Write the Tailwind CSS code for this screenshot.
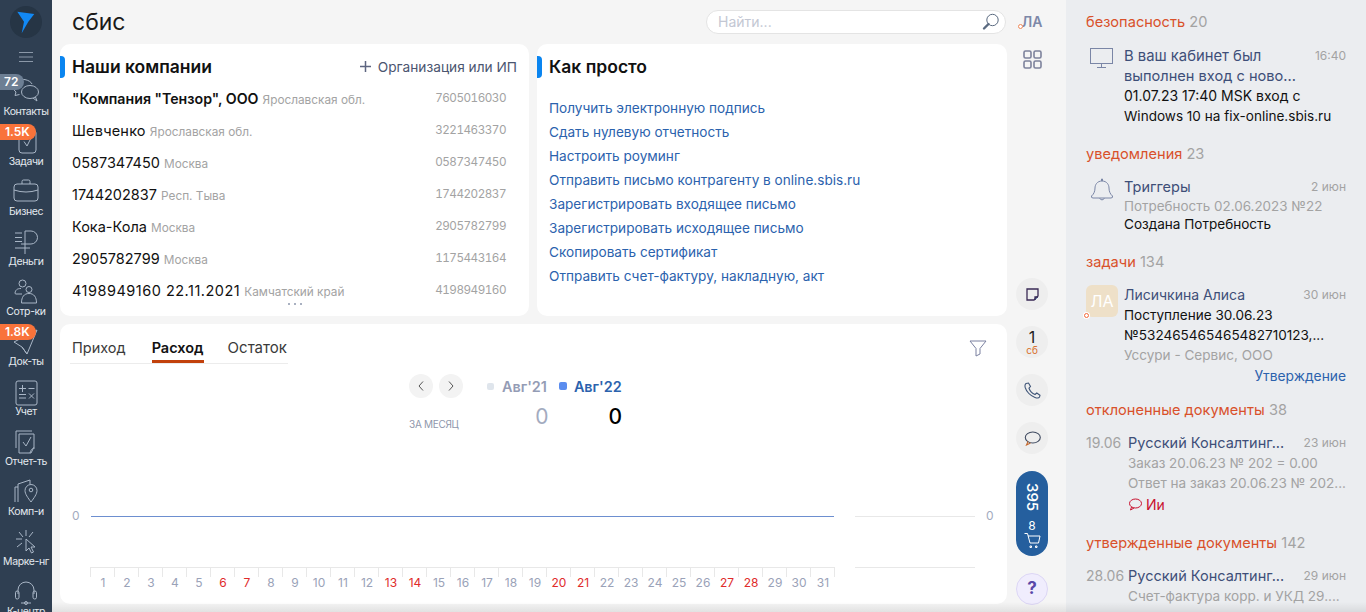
<!DOCTYPE html>
<html lang="ru">
<head>
<meta charset="utf-8">
<script src="https://cdn.jsdelivr.net/npm/@tailwindcss/browser@4"></script>
</head>
<body class="[font-family:Inter,sans-serif] overflow-hidden">
<div class="relative flex h-[612px] w-[1366px] overflow-hidden bg-[#f5f5f5]">

  <!-- NAV -->
  <nav class="relative flex h-[612px] w-[52px] shrink-0 flex-col items-center overflow-hidden bg-[#2f3f52] text-[#e4e9ef]">
    <div class="flex h-[44px] w-full shrink-0 items-start justify-center pt-[6px]">
      <svg width="32" height="32" viewBox="0 0 32 32"><circle cx="16" cy="16" r="16" fill="#263545"/><path d="M7.300 5.700 24.300 8 18.300 15.700 11.700 27.300 14 15.700Z" fill="#1289f5"/></svg>
    </div>
    <div class="flex h-[25px] w-full shrink-0 items-start justify-center">
      <svg width="16" height="12" viewBox="0 0 16 12" class="mt-[7px]" stroke="#8b98a8" fill="none"><path d="M1 1.500h14M1 6h14M1 10.500h14"/></svg>
    </div>

    <a class="flex h-[50px] w-full shrink-0 flex-col items-center justify-end pb-[1px]">
      <svg width="28" height="26" viewBox="0 0 28 26" fill="none" stroke="#a9b6c6" stroke-width="1"><path d="M3 1.500C9-1 18 .5 20 5"/><path d="M3 3C.5 6 1 11 4 13L3 16.500 7.500 15.500"/><ellipse cx="18" cy="13" rx="8.500" ry="6.500"/><path d="M21 19 25 22 23.500 18"/></svg>
      <span class="text-[10.5px] leading-[13px] tracking-[-0.4px]">Контакты</span>
    </a>
    <a class="flex h-[50px] w-full shrink-0 flex-col items-center justify-end pb-[1px]">
      <svg width="22" height="26" viewBox="0 0 22 26" fill="none" stroke="#a9b6c6"><rect x="4" y="1" width="17" height="23" rx="3"/><path d="M9 12.500 12 17 17 7"/></svg>
      <span class="text-[10.5px] leading-[13px] tracking-[-0.4px]">Задачи</span>
    </a>
    <a class="flex h-[50px] w-full shrink-0 flex-col items-center justify-end pb-[1px]">
      <svg width="26" height="24" viewBox="0 0 26 24" fill="none" stroke="#a9b6c6" class="mb-[2px]"><path d="M9 5V2.500Q9 1 10.500 1h5Q17 1 17 2.500V5"/><rect x="1" y="5" width="24" height="17" rx="3"/><path d="M1 11Q13 15 25 11"/></svg>
      <span class="text-[10.5px] leading-[13px] tracking-[-0.4px]">Бизнес</span>
    </a>
    <a class="flex h-[50px] w-full shrink-0 flex-col items-center justify-end pb-[1px]">
      <svg width="24" height="26" viewBox="0 0 24 26" fill="none" stroke="#a9b6c6"><path d="M11 25V2h6a6 6 0 0 1 0 13H7M1 4h7M1 8.500h7M1 12.500h7M1 19h15"/></svg>
      <span class="text-[10.5px] leading-[13px] tracking-[-0.4px]">Деньги</span>
    </a>
    <a class="flex h-[50px] w-full shrink-0 flex-col items-center justify-end pb-[1px]">
      <svg width="24" height="26" viewBox="0 0 24 26" fill="none" stroke="#a9b6c6"><circle cx="8.500" cy="4.500" r="3.500"/><circle cx="15" cy="10.500" r="3"/><path d="M8 15H2Q1 15 1 14C1.500 11 3 9.500 7 9.500M7.500 24c0-6 2.500-9.500 7.500-9.500S22.500 18 22.500 24Z"/></svg>
      <span class="text-[10.5px] leading-[13px] tracking-[-0.4px]">Сотр-ки</span>
    </a>
    <a class="flex h-[50px] w-full shrink-0 flex-col items-center justify-end pb-[1px]">
      <svg width="26" height="26" viewBox="0 0 26 26" fill="none" stroke="#a9b6c6"><path d="M24 1 1 13 9 18 14 25 24 1ZM9 18 14 25"/></svg>
      <span class="text-[10.5px] leading-[13px] tracking-[-0.4px]">Док-ты</span>
    </a>
    <a class="flex h-[50px] w-full shrink-0 flex-col items-center justify-end pb-[1px]">
      <svg width="24" height="26" viewBox="0 0 24 26" fill="none" stroke="#a9b6c6" class="mb-[-1px]"><rect x="2" y="1" width="21" height="24" rx="2"/><path d="M5 8.500h7M8.500 5v7M14.500 8.500h6M5 14.500h7M5 18h7M15 13.500l5 5M20 13.500l-5 5"/></svg>
      <span class="text-[10.5px] leading-[13px] tracking-[-0.4px]">Учет</span>
    </a>
    <a class="flex h-[50px] w-full shrink-0 flex-col items-center justify-end pb-[1px]">
      <svg width="22" height="26" viewBox="0 0 22 26" fill="none" stroke="#a9b6c6"><path d="M1 19V2h16"/><path d="M4 24V5h15v13l-3 6Z"/><path d="M8 13l3 4 5-9M15 24c1-4 3-5 5-5"/></svg>
      <span class="text-[10.5px] leading-[13px] tracking-[-0.4px]">Отчет-ть</span>
    </a>
    <a class="flex h-[50px] w-full shrink-0 flex-col items-center justify-end pb-[1px]">
      <svg width="24" height="27" viewBox="0 0 24 27" fill="none" stroke="#a9b6c6"><path d="M1 24V9h3M4 24V6l12-4v4"/><path d="M17 24c-3-4-6-8-6-11.500a6 6 0 0 1 12 0C23 16 20 20 17 24Z"/><circle cx="17" cy="12" r="1.800"/></svg>
      <span class="text-[10.5px] leading-[13px] tracking-[-0.4px]">Комп-и</span>
    </a>
    <a class="flex h-[50px] w-full shrink-0 flex-col items-center justify-end pb-[1px]">
      <svg width="24" height="26" viewBox="0 0 24 26" fill="none" stroke="#a9b6c6"><path d="M12 1v6M2 10h6M5 3l4 5M19 3l-4 5M3 18l5-4"/><path d="M12 10 21 18 17 18 19.500 23 17.500 24 15 19 12 22Z"/></svg>
      <span class="text-[10.5px] leading-[13px] tracking-[-0.4px]">Марке-нг</span>
    </a>
    <a class="flex h-[50px] w-full shrink-0 flex-col items-center justify-end pb-[1px]">
      <svg width="24" height="26" viewBox="0 0 24 26" fill="none" stroke="#a9b6c6"><path d="M4 15V11a8 8 0 0 1 16 0v4"/><rect x="1.500" y="12" width="3.500" height="8" rx="1.700"/><rect x="19" y="12" width="3.500" height="8" rx="1.700"/><path d="M7 24h10"/><circle cx="12" cy="24" r="1.500"/></svg>
      <span class="whitespace-nowrap text-[10.5px] leading-[13px] tracking-[-0.4px]">К-центр</span>
    </a>

    <span class="absolute left-0 top-[74px] flex h-[16px] w-[24px] items-center rounded-r-full bg-[#6d7f94] pl-[4px] text-[12px] font-semibold text-white">72</span>
    <span class="absolute left-0 top-[124px] flex h-[16px] w-[36px] items-center rounded-r-full bg-[#f9733a] pl-[5px] text-[12px] font-semibold text-white">1.5K</span>
    <span class="absolute left-0 top-[324px] flex h-[16px] w-[36px] items-center rounded-r-full bg-[#f9733a] pl-[5px] text-[12px] font-semibold text-white">1.8K</span>
  </nav>

  <!-- MAIN -->
  <main class="flex w-[955px] shrink-0 flex-col pl-[8px]">
    <header class="flex h-[44px] items-center justify-between pl-[12px] pr-[1px]">
      <span class="text-[23px] leading-none text-[#1a1a1a]">сбис</span>
      <div class="mb-[1px] flex h-[24px] w-[300px] items-center justify-between rounded-full border border-[#e4e4e4] bg-white pl-[11px] pr-[5px]">
        <span class="text-[14px] text-[#c3c7d3]">Найти...</span>
        <svg width="18" height="18" viewBox="0 0 18 18" fill="none"><circle cx="10.500" cy="7" r="5.700" stroke="#5a6a80" stroke-width="1"/><path d="M6.500 11 2 15.500" stroke="#5a6a80" stroke-width="2.400" stroke-linecap="round"/></svg>
      </div>
    </header>

    <div class="flex h-[272px] gap-[8px]">
      <section class="flex w-[469px] flex-col rounded-[10px] bg-white">
        <div class="flex h-[46px] shrink-0 items-center justify-between pr-[12px]">
          <div class="flex items-center gap-[7px]">
            <span class="h-[22px] w-[5px] rounded-r-[4px] bg-[#0a85f0]"></span>
            <h2 class="text-[17.5px] font-semibold leading-none text-[#111]">Наши компании</h2>
          </div>
          <div class="flex items-center gap-[7px] text-[13.7px] text-[#4b5570]">
            <svg width="11" height="11" viewBox="0 0 11 11" stroke="#5d6580" stroke-width="1.500"><path d="M5.500 0v11M0 5.500h11"/></svg>
            <span>Организация или ИП</span>
          </div>
        </div>
        <ul class="relative mt-[-7px] flex flex-col pl-[12px] pr-[23px]">
          <li class="flex h-[32px] items-center justify-between"><span class="text-[14.5px] text-[#111]"><b class="text-[14.2px] font-semibold">"Компания "Тензор", ООО</b> <span class="text-[11.8px] text-[#a3a3a3]">Ярославская обл.</span></span><span class="text-[11.7px] tabular-nums tracking-[-0.5px] text-[#a3a3a3]">7605016030</span></li>
          <li class="flex h-[32px] items-center justify-between"><span class="text-[14.5px] text-[#111]"><span class="tracking-[0.2px]">Шевченко</span> <span class="text-[11.8px] text-[#a3a3a3]">Ярославская обл.</span></span><span class="text-[11.7px] tabular-nums tracking-[-0.5px] text-[#a3a3a3]">3221463370</span></li>
          <li class="flex h-[32px] items-center justify-between"><span class="text-[14.5px] text-[#111]">0587347450 <span class="text-[11.8px] text-[#a3a3a3]">Москва</span></span><span class="text-[11.7px] tabular-nums tracking-[-0.5px] text-[#a3a3a3]">0587347450</span></li>
          <li class="flex h-[32px] items-center justify-between"><span class="text-[14.5px] text-[#111]">1744202837 <span class="text-[11.8px] text-[#a3a3a3]">Респ. Тыва</span></span><span class="text-[11.7px] tabular-nums tracking-[-0.5px] text-[#a3a3a3]">1744202837</span></li>
          <li class="flex h-[32px] items-center justify-between"><span class="text-[14.5px] text-[#111]">Кока-Кола <span class="text-[11.8px] text-[#a3a3a3]">Москва</span></span><span class="text-[11.7px] tabular-nums tracking-[-0.5px] text-[#a3a3a3]">2905782799</span></li>
          <li class="flex h-[32px] items-center justify-between"><span class="text-[14.5px] text-[#111]">2905782799 <span class="text-[11.8px] text-[#a3a3a3]">Москва</span></span><span class="text-[11.7px] tabular-nums tracking-[-0.5px] text-[#a3a3a3]">1175443164</span></li>
          <li class="flex h-[32px] items-center justify-between"><span class="text-[14.5px] text-[#111]"><span class="tracking-[0.5px]">4198949160 22.11.2021</span> <span class="text-[11.8px] text-[#a3a3a3]">Камчатский край</span></span><span class="text-[11.7px] tabular-nums tracking-[-0.5px] text-[#a3a3a3]">4198949160</span></li>
          <li class="absolute left-[228px] top-[220px] flex gap-[4px]"><i class="h-[2px] w-[2px] rounded-full bg-[#8d97ad]"></i><i class="h-[2px] w-[2px] rounded-full bg-[#8d97ad]"></i><i class="h-[2px] w-[2px] rounded-full bg-[#8d97ad]"></i></li>
        </ul>
      </section>
      <section class="flex w-[470px] flex-col rounded-[10px] bg-white">
        <div class="flex h-[46px] items-center gap-[7px]">
          <span class="h-[22px] w-[5px] rounded-r-[4px] bg-[#0a85f0]"></span>
          <h2 class="text-[17.5px] font-semibold leading-none text-[#111]">Как просто</h2>
        </div>
        <ul class="mt-[6px] flex flex-col pl-[12px] text-[13.6px] leading-[24px] text-[#2b62ad]">
          <li>Получить электронную подпись</li>
          <li>Сдать нулевую отчетность</li>
          <li>Настроить роуминг</li>
          <li>Отправить письмо контрагенту в online.sbis.ru</li>
          <li>Зарегистрировать входящее письмо</li>
          <li>Зарегистрировать исходящее письмо</li>
          <li>Скопировать сертификат</li>
          <li>Отправить счет-фактуру, накладную, акт</li>
        </ul>
      </section>
    </div>

    <section class="mt-[8px] flex h-[280px] w-[947px] flex-col rounded-[10px] bg-white">
      <div class="flex h-[40px] items-start justify-between pl-[10px] pr-[20px]">
        <div class="flex h-[40px] w-[218px] gap-[25px] border-b border-[#ececec] pl-[2px] pt-[15px] text-[14.5px] leading-[18px] text-[#3a3a3a]">
          <span class="mr-[1px]">Приход</span>
          <span class="h-[24px] border-b-[3px] border-[#c2410c] font-semibold text-[#111]">Расход</span>
          <span class="ml-[-1px] text-[15px]">Остаток</span>
        </div>
        <svg width="18" height="17" viewBox="0 0 18 17" fill="none" stroke="#7a80a0" class="mt-[16px]"><path d="M1 1h16L11 8.500v5.500l-4 2V8.500Z"/></svg>
      </div>
      <div class="ml-[349px] mt-[10px] flex h-[24px] items-center">
        <span class="flex h-[24px] w-[24px] items-center justify-center rounded-full bg-[#f3f3f3]"><svg width="6" height="10" viewBox="0 0 6 10" fill="none" stroke="#555"><path d="M5 .5 1 5l4 4.500"/></svg></span>
        <span class="ml-[6px] flex h-[24px] w-[24px] items-center justify-center rounded-full bg-[#f3f3f3]"><svg width="6" height="10" viewBox="0 0 6 10" fill="none" stroke="#555"><path d="M1 .5 5 5 1 9.500"/></svg></span>
        <span class="ml-[24px] h-[7px] w-[7px] rounded-[2px] bg-[#dfe5ec]"></span>
        <span class="ml-[8px] mt-[2px] text-[14.4px] font-semibold text-[#949cb5]">Авг'21</span>
        <span class="ml-[12px] h-[8px] w-[8px] rounded-[2px] bg-[#5b8def]"></span>
        <span class="ml-[7px] mt-[2px] text-[14.4px] font-semibold text-[#2b62ad]">Авг'22</span>
      </div>
      <div class="ml-[349px] mt-[7px] flex h-[24px] w-[213px] items-end">
        <span class="mb-[-3px] text-[10px] tracking-[-0.3px] text-[#8f97ac]">ЗА МЕСЯЦ</span>
        <span class="ml-auto text-[21px] leading-[24px] text-[#a3abc0]">0</span>
        <span class="ml-[60px] text-[21px] font-medium leading-[24px] text-black">0</span>
      </div>
      <div class="mt-[77px] flex h-[20px] items-center pl-[12px] text-[12px] text-[#a3abc0]">
        <span class="w-[19px]">0</span>
        <span class="h-px w-[743px] bg-[#6d8fd0]"></span>
        <span class="ml-[21px] h-px w-[120px] bg-[#e8e8e8]"></span>
        <span class="ml-[11px]">0</span>
      </div>
      <div class="mt-[41px] flex items-start pl-[30px]">
        <div class="flex w-[745px] flex-col">
          <div class="h-[10px] border-t border-[#e8e8e8] bg-[repeating-linear-gradient(90deg,#e8e8e8_0_1px,transparent_1px_24px)]"></div>
          <div class="grid grid-cols-[repeat(31,24px)] pl-[1px] text-center text-[12px] leading-[12px] text-[#9aa2b8]">
            <span>1</span><span>2</span><span>3</span><span>4</span><span>5</span><span class="text-[#e02b2b]">6</span><span class="text-[#e02b2b]">7</span><span>8</span><span>9</span><span>10</span><span>11</span><span>12</span><span class="text-[#e02b2b]">13</span><span class="text-[#e02b2b]">14</span><span>15</span><span>16</span><span>17</span><span>18</span><span>19</span><span class="text-[#e02b2b]">20</span><span class="text-[#e02b2b]">21</span><span>22</span><span>23</span><span>24</span><span>25</span><span>26</span><span class="text-[#e02b2b]">27</span><span class="text-[#e02b2b]">28</span><span>29</span><span>30</span><span>31</span>
          </div>
        </div>
        <span class="ml-[20px] h-px w-[120px] bg-[#e8e8e8]"></span>
      </div>
    </section>
  </main>

  <!-- RAIL -->
  <aside class="flex w-[59px] shrink-0 flex-col items-center pb-[7px] pr-[9px]">
    <div class="relative mt-[14px] text-[14px] font-semibold leading-[16px] text-[#7d88a8]">ЛА<i class="absolute left-[-4px] top-[10px] h-[5px] w-[5px] rounded-full border border-[#f08a5a] bg-white"></i></div>
    <svg width="19" height="19" viewBox="0 0 19 19" fill="none" stroke="#7d829c" stroke-width="1.600" class="mt-[20px]"><rect x="1" y="1" width="7" height="7" rx="1.500"/><rect x="11" y="1" width="7" height="7" rx="1.500"/><rect x="1" y="11" width="7" height="7" rx="1.500"/><rect x="11" y="11" width="7" height="7" rx="1.500"/></svg>
    <div class="mt-auto flex flex-col items-center gap-[16px]">
      <span class="flex h-[32px] w-[32px] items-center justify-center rounded-full bg-[#eeeeee]"><svg width="13" height="13" viewBox="0 0 13 13" fill="none" stroke="#3a2a55" stroke-width="1.300"><path d="M1 1h11v7l-4 4H1Z"/><path d="M12 9H9v3" fill="#3a6ea5"/></svg></span>
      <span class="flex h-[32px] w-[32px] flex-col items-center justify-center rounded-full bg-[#eeeeee] text-[#222]"><span class="text-[16px] leading-[16px]">1</span><span class="text-[10px] leading-[10px] text-[#d9722f]">сб</span></span>
      <span class="flex h-[32px] w-[32px] items-center justify-center rounded-full bg-[#eeeeee]"><svg width="17" height="17" viewBox="0 0 17 17" fill="none" stroke="#3f5578" stroke-width="1.100"><path d="M2 1.500 4.500 1 6.500 4.500 5 6.200C6 9 8.500 11.500 11 12.500L12.800 11 16 13.200 15.500 15C15 16 13 16.200 11 15.500 7 14 2.500 10 1.200 5.500 .8 3.800 1 2.200 2 1.500Z"/></svg></span>
      <span class="flex h-[32px] w-[32px] items-center justify-center rounded-full bg-[#eeeeee]"><svg width="17" height="15" viewBox="0 0 17 15" fill="none" stroke="#3f4a60" stroke-width="1.100"><ellipse cx="8.800" cy="6.500" rx="7.500" ry="5.500"/><path d="M4 10.500 2.500 14 6.500 12" stroke="#c46a30"/></svg></span>
      <span class="my-[1px] flex h-[85px] w-[32px] flex-col items-center rounded-full bg-[#255f9e] pt-[12px] text-white">
        <span class="text-[15px] font-medium leading-[17px] [writing-mode:vertical-rl]">395</span>
        <span class="mt-[8px] text-[12px] leading-[14px]">8</span>
        <svg width="17" height="16" viewBox="0 0 17 16" fill="none" stroke="#fff"><path d="M.5.500h3L6 10h8.500L16 3H4M6 13h1.500v1.500H6ZM11.500 13H13v1.500h-1.500Z"/></svg>
      </span>
      <span class="flex h-[32px] w-[32px] items-center justify-center rounded-full border border-[#dcd6f5] bg-[#f0edfd] text-[17px] font-bold text-[#5a48a8]">?</span>
    </div>
  </aside>

  <!-- RIGHT PANEL -->
  <aside class="flex w-[300px] shrink-0 flex-col overflow-hidden bg-[#ebedf0] pl-[20px] pr-[20px] text-[13.55px]">
    <h3 class="mt-[13px] text-[14.6px] leading-[18px] text-[#d9512b]">безопасность <span class="text-[#a3a3a3]">20</span></h3>
    <div class="mt-[15px] flex">
      <svg width="24" height="21" viewBox="0 0 24 21" fill="none" stroke="#7a86a6" class="ml-[4px] mt-[2px] shrink-0"><rect x=".5" y=".5" width="22" height="15"/><path d="M11.500 16v3.500M7 19.500h9"/></svg>
      <div class="ml-[10px] min-w-0 flex-1 leading-[20px]">
        <div class="flex justify-between text-[#3e4f78]"><span class="text-[14.8px]">В ваш кабинет был</span><span class="text-[12px] text-[#a3a3a3]">16:40</span></div>
        <div class="text-[14.6px] text-[#3e4f78]">выполнен вход с ново...</div>
        <div class="text-[14px] text-[#111]">01.07.23 17:40 MSK вход с</div>
        <div class="whitespace-nowrap text-[#111]">Windows 10 на fix-online.sbis.ru</div>
      </div>
    </div>
    <h3 class="mt-[19px] text-[14.6px] leading-[18px] text-[#d9512b]">уведомления <span class="text-[#a3a3a3]">23</span></h3>
    <div class="mt-[15px] flex">
      <svg width="24" height="24" viewBox="0 0 24 24" fill="none" stroke="#7a86a6" class="ml-[4px] shrink-0"><path d="M1.500 18C4 16 5 13 5 10s2-7 7-7 7 4 7 7 1 6 3.500 8Q23 20 21 20H3Q1 20 1.500 18Z"/><path d="M9.500 20.500q2.500 3 5 0M11.500 3V1h1v2"/></svg>
      <div class="ml-[10px] min-w-0 flex-1 leading-[18.500px]">
        <div class="flex justify-between text-[14.5px] text-[#3e4f78]"><span>Триггеры</span><span class="text-[12px] text-[#a3a3a3]">2 июн</span></div>
        <div class="text-[13.45px] text-[#a3a3a3]">Потребность 02.06.2023 №22</div>
        <div class="text-[#111]">Создана Потребность</div>
      </div>
    </div>
    <h3 class="mt-[19px] text-[14.6px] leading-[18px] text-[#d9512b]">задачи <span class="text-[#a3a3a3]">134</span></h3>
    <div class="mt-[14px] flex">
      <div class="relative flex h-[32px] w-[32px] shrink-0 items-center justify-center rounded-[6px] bg-[#eee0c8] text-[16px] text-white">ЛА<i class="absolute left-[-2px] top-[28px] h-[5px] w-[5px] rounded-full border border-[#f2683a] bg-white shadow-[0_0_0_1px_white]"></i></div>
      <div class="ml-[6px] min-w-0 flex-1 leading-[20px]">
        <div class="flex justify-between text-[14px] text-[#3e4f78]"><span>Лисичкина Алиса</span><span class="text-[12px] text-[#a3a3a3]">30 июн</span></div>
        <div class="text-[#111]">Поступление 30.06.23</div>
        <div class="whitespace-nowrap text-[#111]">№532465465465482710123,...</div>
        <div class="text-[#a3a3a3]">Уссури - Сервис, ООО</div>
        <div class="mt-[1px] text-right text-[13.8px] text-[#2b62ad]">Утверждение</div>
      </div>
    </div>
    <h3 class="mt-[15px] text-[14.6px] leading-[18px] text-[#d9512b]">отклоненные документы <span class="text-[#a3a3a3]">38</span></h3>
    <div class="mt-[14px] flex leading-[20px]">
      <span class="w-[42px] shrink-0 text-[14px] text-[#a3a3a3]">19.06</span>
      <div class="min-w-0 flex-1">
        <div class="flex justify-between text-[14.5px] text-[#3e4f78]"><span>Русский Консалтинг...</span><span class="text-[12px] text-[#a3a3a3]">23 июн</span></div>
        <div class="text-[13.45px] text-[#a3a3a3]">Заказ 20.06.23 № 202 = 0.00</div>
        <div class="whitespace-nowrap text-[#a3a3a3]">Ответ на заказ 20.06.23 № 202...</div>
        <div class="mt-[2px] flex items-center gap-[4px] text-[14px] text-[#c8102e]"><svg width="14" height="13" viewBox="0 0 14 13" fill="none" stroke="#c8102e"><ellipse cx="7.500" cy="5.500" rx="6" ry="4.500"/><path d="M3.500 9 2.500 12 6 10"/></svg>Ии</div>
      </div>
    </div>
    <h3 class="mt-[19px] text-[14.6px] leading-[18px] text-[#d9512b]">утвержденные документы <span class="text-[#a3a3a3]">142</span></h3>
    <div class="mt-[14px] flex leading-[20px]">
      <span class="w-[42px] shrink-0 text-[14px] text-[#a3a3a3]">28.06</span>
      <div class="min-w-0 flex-1">
        <div class="flex justify-between text-[14.5px] text-[#3e4f78]"><span>Русский Консалтинг...</span><span class="text-[12px] text-[#a3a3a3]">29 июн</span></div>
        <div class="whitespace-nowrap text-[#a3a3a3]">Счет-фактура корр. и УКД 29....</div>
      </div>
    </div>
  </aside>

  <div class="pointer-events-none absolute bottom-0 left-[52px] right-0 h-[10px] bg-gradient-to-t from-black/8 to-transparent"></div>
</div>
</body>
</html>
